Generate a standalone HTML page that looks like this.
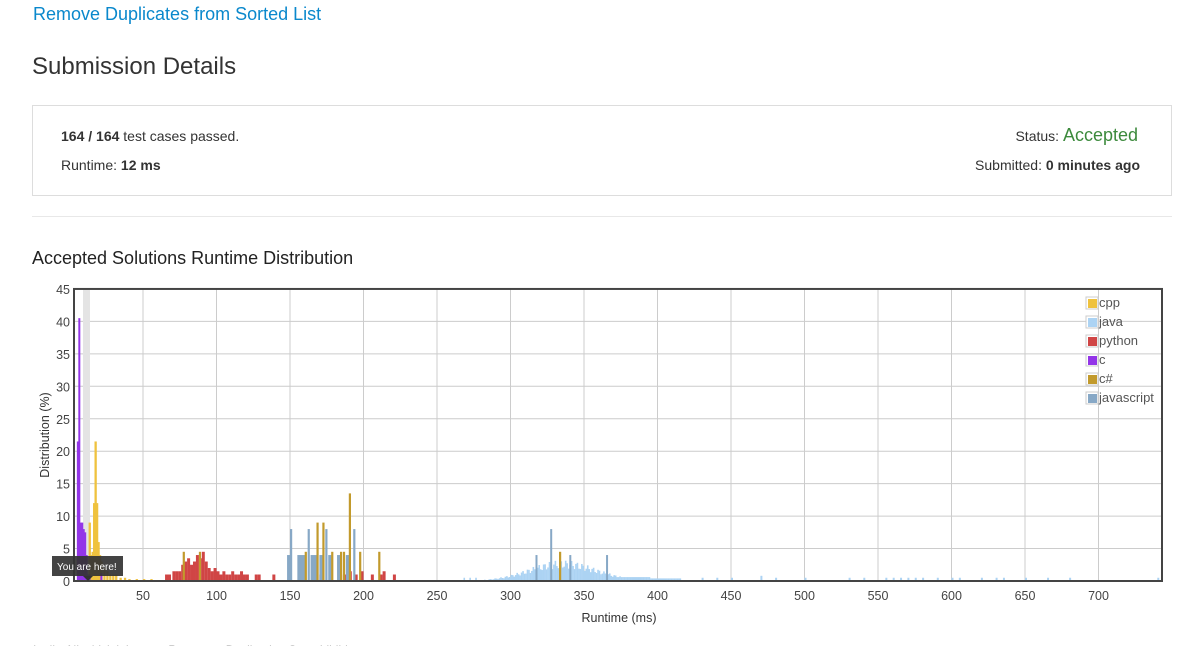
<!DOCTYPE html>
<html><head><meta charset="utf-8">
<style>
body{margin:0;background:#fff;font-family:"Liberation Sans",Arial,sans-serif;color:#333;width:1186px;height:646px;overflow:hidden;position:relative}
.a{position:absolute}
</style></head><body>
<div class="a" style="left:33px;top:4px;font-size:18px;color:#0a88cc">Remove Duplicates from Sorted List</div>
<div class="a" style="left:32px;top:53px;font-size:24px;color:#333">Submission Details</div>
<div class="a" style="left:32px;top:105px;width:1138px;height:89px;border:1px solid #ddd"></div>
<div class="a" style="left:61px;top:128px;font-size:14px"><b>164 / 164</b> test cases passed.</div>
<div class="a" style="left:61px;top:157px;font-size:14px">Runtime: <b>12 ms</b></div>
<div class="a" style="right:48px;top:124px;font-size:14px;line-height:22px">Status: <span style="color:#3c8a3c;font-size:18px">Accepted</span></div>
<div class="a" style="right:46px;top:157px;font-size:14px">Submitted: <b>0 minutes ago</b></div>
<div class="a" style="left:32px;top:216px;width:1140px;border-top:1px solid #e8e8e8"></div>
<div class="a" style="left:32px;top:248px;font-size:18px;color:#222">Accepted Solutions Runtime Distribution</div>
<svg class="a" style="left:0;top:280px" width="1186" height="366" id="s" font-family="Liberation Sans,Arial,sans-serif"></svg>
<script>
var s=document.getElementById('s'),h='',O=280;
function X(m){return 69.5+1.47*m}function Y(v){return 581-O-6.49*v}
for(var v=5;v<=45;v+=5)h+='<line x1="74" x2="1162" y1="'+Y(v)+'" y2="'+Y(v)+'" stroke="#ccc"/>';
for(var m=50;m<=700;m+=50)h+='<line x1="'+X(m)+'" x2="'+X(m)+'" y1="'+Y(45)+'" y2="'+Y(0)+'" stroke="#ccc"/>';
h+='<rect x="83" y="'+Y(45)+'" width="7" height="'+(6.49*45)+'" fill="#e4e4e4"/>';
function bar(m,v,c,w){h+='<rect x="'+X(m)+'" y="'+Y(v)+'" width="'+(w||1.6)+'" height="'+(6.49*v)+'" fill="'+c+'"/>'}
var java='#acd3f3',py='#d04545',cp='#efc23e',c='#9335e8',cs='#c29a2c',js='#87a8c6';
for(var m=265;m<=415;m++){var v=3.2*Math.exp(-Math.pow((m-335)/32,2))*(0.8+0.2*Math.sin(m*1.7));if(m>365&&m<395)v=Math.max(v,0.6);if(m>=395)v=0.4;if(m<280)v=m%4==0?0.5:0;if(v>0.2)bar(m,v,java)}
[430,440,450,470,480,500,530,540,555,560,565,570,575,580,590,600,605,620,630,635,650,665,680,740].forEach(function(m){bar(m,m==470?0.8:0.5,java,2)});
[[65,1],[67,1],[70,1.5],[72,1.5],[74,1.5],[76,2.5],[78,3],[80,3.5],[82,2.5],[84,3],[86,4],[88,3.5],[90,4.5],[92,3],[94,2],[96,1.5],[98,2],[100,1.5],[102,1],[104,1.5],[106,1],[108,1],[110,1.5],[112,1],[114,1],[116,1.5],[118,1],[120,1],[126,1],[128,1],[138,1],[149,1.5],[170,1],[186,1],[190,1.5],[194,1],[198,1.5],[205,1],[211,1],[213,1.5],[220,1]].forEach(function(d){bar(d[0],d[1],py,3)});
[[13,9],[14,4],[15,4.5],[16,12],[17,21.5],[18,12],[19,6],[20,4],[21,3],[23,2],[25,1.5],[27,1],[29,1],[31,1],[34,0.5],[37,0.5],[40,0.3],[45,0.3],[50,0.3],[55,0.3]].forEach(function(d){bar(d[0],d[1],cp,2.3)});
[[5,21.5],[6,40.5],[7,9],[8,9],[9,8],[10,7.5],[11,4],[12,1],[13,1],[21,1.2]].forEach(function(d){bar(d[0],d[1],c,2)});
[[148,4],[150,8],[155,4],[157,4],[159,4],[162,8],[164,4],[166,4],[170,4],[174,8],[176,4],[182,4],[188,4],[193,8]].forEach(function(d){bar(d[0],d[1],js,d[1]>5?2.2:3.2)});
[[317,4],[327,8],[340,4],[365,4]].forEach(function(d){bar(d[0],d[1],js,2)});
[[77,4.5],[88,4.5],[160,4.5],[168,9],[172,9],[178,4.5],[184,4.5],[186,4.5],[190,13.5],[197,4.5],[210,4.5],[333,4.5]].forEach(function(d){bar(d[0],d[1],cs,2.2)});
h+='<rect x="74" y="'+Y(45)+'" width="1088" height="'+(6.49*45)+'" fill="none" stroke="#444" stroke-width="2"/>';
for(var v=0;v<=45;v+=5)h+='<text x="70" y="'+(Y(v)+5)+'" text-anchor="end" font-size="12.5" fill="#444">'+v+'</text>';
for(var m=50;m<=700;m+=50)h+='<text x="'+X(m)+'" y="'+(Y(0)+19)+'" text-anchor="middle" font-size="12.5" fill="#444">'+m+'</text>';
h+='<text x="619" y="'+(617-O+5)+'" text-anchor="middle" font-size="12.5" fill="#333">Runtime (ms)</text>';
h+='<text transform="translate(49,'+(435-O)+') rotate(-90)" text-anchor="middle" font-size="12.5" fill="#333">Distribution (%)</text>';
h+='<rect x="52" y="'+(556-O)+'" width="71" height="20" fill="#333" opacity="0.92"/><polygon points="83,'+(576-O)+' 93,'+(576-O)+' 88,'+(581-O)+'" fill="#333"/><text x="57" y="'+(570-O)+'" font-size="10" fill="#fff">You are here!</text>';
var L=[['cpp',cp],['java',java],['python',py],['c',c],['c#',cs],['javascript',js]];
L.forEach(function(d,i){var y=297+i*19-O;h+='<rect x="1086" y="'+y+'" width="12" height="12" fill="#fff" stroke="#ccc"/><rect x="1088" y="'+(y+2)+'" width="9" height="9" fill="'+d[1]+'"/><text x="1099" y="'+(y+10)+'" font-size="13" fill="#555">'+d[0]+'</text>'});
h+='<text x="33" y="'+(654-O)+'" font-size="12" fill="#999">Inelic: Ninchisini: Lettons Parsmans Desiltanlon Sarts Libiblar</text>';
s.innerHTML=h;
</script>
</body></html>
